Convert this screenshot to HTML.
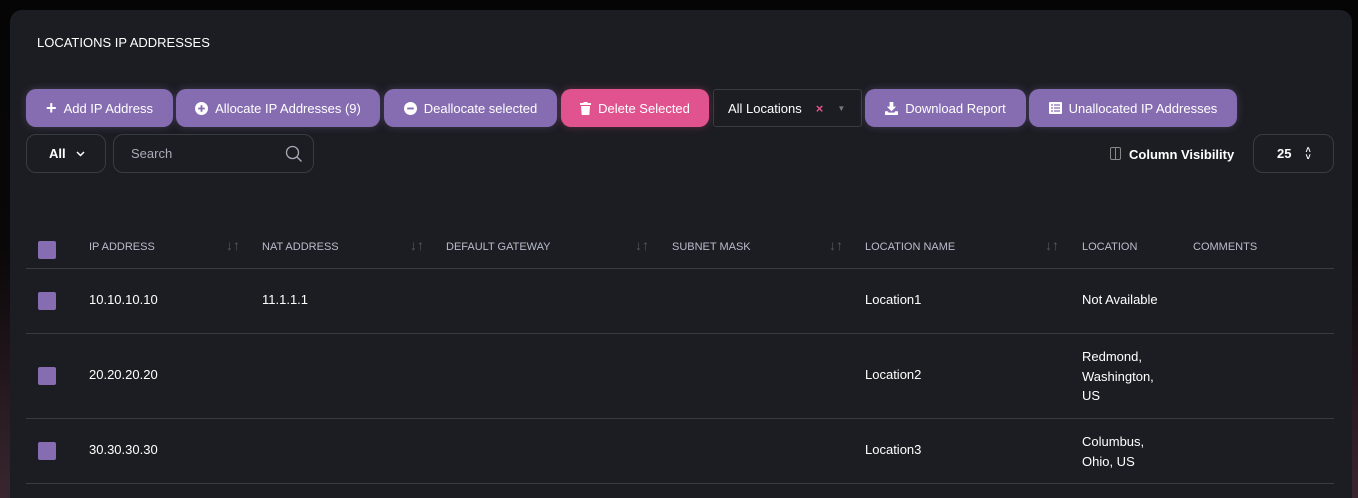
<!DOCTYPE html>
<html><head><style>
*{box-sizing:border-box;margin:0;padding:0}
html,body{width:1358px;height:498px;overflow:hidden}
body{background:linear-gradient(180deg,#050505 0%,#0a0708 50%,#3a2630 100%);font-family:"Liberation Sans",sans-serif;color:#fff;position:relative}
.card{position:absolute;left:10px;top:10px;width:1342px;height:488px;background:#1c1d22;border-radius:12px 12px 0 0}
.a{position:absolute}
.title{left:37px;top:35px;font-size:13px;color:#fff}
.btn{position:absolute;top:89px;height:38px;border-radius:10px;background:#866db2;font-size:13px;display:flex;align-items:center;justify-content:center;gap:7px;box-shadow:0 0 8px rgba(134,109,178,.35)}
.pink{background:#e0538e;box-shadow:0 0 8px rgba(224,83,142,.35)}
.box{position:absolute;border:1px solid #3a3b42;border-radius:10px;font-size:13px;display:flex;align-items:center}
.th{position:absolute;top:241px;font-size:11px;color:#b9bccb}
.sort{position:absolute;top:237px;font-size:14px;color:#555862}
.line{position:absolute;left:26px;width:1308px;height:1px;background:#3a3b42}
.cb{position:absolute;left:38px;width:18px;height:18px;background:#866db2;border-radius:2px}
.td{position:absolute;font-size:13px;color:#fff;line-height:16px}
</style></head><body>
<div class="card"></div>
<div class="a title">LOCATIONS IP ADDRESSES</div>
<div class="btn" style="left:26px;width:147px"><span style="font-size:18px;font-weight:bold">+</span>Add IP Address</div>
<div class="btn" style="left:176px;width:204px"><svg width="13" height="13" viewBox="0 0 14 14"><circle cx="7" cy="7" r="7" fill="#fff"/><path d="M7 3.5v7M3.5 7h7" stroke="#866db2" stroke-width="2"/></svg>Allocate IP Addresses (9)</div>
<div class="btn" style="left:384px;width:173px"><svg width="13" height="13" viewBox="0 0 14 14"><circle cx="7" cy="7" r="7" fill="#fff"/><path d="M3.5 7h7" stroke="#866db2" stroke-width="2"/></svg>Deallocate selected</div>
<div class="btn pink" style="left:561px;width:148px"><svg width="11" height="13" viewBox="0 0 11 13"><rect x="0" y="1" width="11" height="2" fill="#fff"/><rect x="3.5" y="0" width="4" height="1.5" fill="#fff"/><path d="M1 4h9l-.7 9H1.7z" fill="#fff"/></svg>Delete Selected</div>
<div class="box" style="left:713px;top:89px;width:149px;height:38px;border-radius:3px;padding-left:14px">All Locations<span style="color:#e0538e;margin-left:14px;font-weight:bold">×</span><span style="color:#777;margin-left:14px;font-size:8px">▼</span></div>
<div class="btn" style="left:865px;width:161px"><svg width="13" height="13" viewBox="0 0 14 14"><path d="M5 0h4v5h3L7 10 2 5h3z" fill="#fff"/><path d="M0 10h3l1 1.5h6l1-1.5h3v4H0z" fill="#fff"/></svg>Download Report</div>
<div class="btn" style="left:1029px;width:208px"><svg width="13" height="12" viewBox="0 0 13 12"><rect width="13" height="12" rx="1" fill="#fff"/><path d="M2 3h2M5 3h6M2 6h2M5 6h6M2 9h2M5 9h6" stroke="#866db2" stroke-width="1.3"/></svg>Unallocated IP Addresses</div>
<div class="box" style="left:26px;top:134px;width:80px;height:39px;padding-left:22px;font-weight:bold">All<svg style="margin-left:10px" width="9" height="6" viewBox="0 0 9 6"><path d="M1 1l3.5 3.5L8 1" stroke="#fff" stroke-width="1.5" fill="none"/></svg></div>
<div class="box" style="left:113px;top:134px;width:201px;height:39px;padding-left:17px;color:#a8abb8">Search<svg style="position:absolute;right:10px;top:10px" width="18" height="18" viewBox="0 0 18 18"><circle cx="7.5" cy="7.5" r="6" stroke="#a8abb8" stroke-width="1.3" fill="none"/><path d="M12 12l4.5 4.5" stroke="#a8abb8" stroke-width="1.3"/></svg></div>
<div class="a" style="left:1110px;top:147px;width:11px;height:13px;border:1px solid #888;border-radius:2px"><div style="position:absolute;left:4px;top:0;width:1px;height:11px;background:#888"></div></div>
<div class="a" style="left:1129px;top:147px;font-size:13px;font-weight:bold">Column Visibility</div>
<div class="box" style="left:1253px;top:134px;width:81px;height:39px;padding-left:23px;font-weight:bold">25<span style="margin-left:14px;font-size:9px;line-height:7px;display:inline-block;text-align:center">˄<br>˅</span></div>

<div class="cb" style="top:241px"></div>
<div class="th" style="left:89px">IP ADDRESS</div><div class="sort" style="left:226px">↓↑</div>
<div class="th" style="left:262px">NAT ADDRESS</div><div class="sort" style="left:410px">↓↑</div>
<div class="th" style="left:446px">DEFAULT GATEWAY</div><div class="sort" style="left:635px">↓↑</div>
<div class="th" style="left:672px">SUBNET MASK</div><div class="sort" style="left:829px">↓↑</div>
<div class="th" style="left:865px">LOCATION NAME</div><div class="sort" style="left:1045px">↓↑</div>
<div class="th" style="left:1082px">LOCATION</div>
<div class="th" style="left:1193px">COMMENTS</div>
<div class="line" style="top:268px"></div>

<div class="cb" style="top:292px"></div>
<div class="td" style="left:89px;top:292px">10.10.10.10</div>
<div class="td" style="left:262px;top:292px">11.1.1.1</div>
<div class="td" style="left:865px;top:292px">Location1</div>
<div class="td" style="left:1082px;top:292px">Not Available</div>
<div class="line" style="top:333px"></div>

<div class="cb" style="top:367px"></div>
<div class="td" style="left:89px;top:367px">20.20.20.20</div>
<div class="td" style="left:865px;top:367px">Location2</div>
<div class="td" style="left:1082px;top:347px;line-height:19.5px">Redmond,<br>Washington,<br>US</div>
<div class="line" style="top:418px"></div>

<div class="cb" style="top:442px"></div>
<div class="td" style="left:89px;top:442px">30.30.30.30</div>
<div class="td" style="left:865px;top:442px">Location3</div>
<div class="td" style="left:1082px;top:432px;line-height:20px">Columbus,<br>Ohio, US</div>
<div class="line" style="top:483px"></div>
</body></html>
